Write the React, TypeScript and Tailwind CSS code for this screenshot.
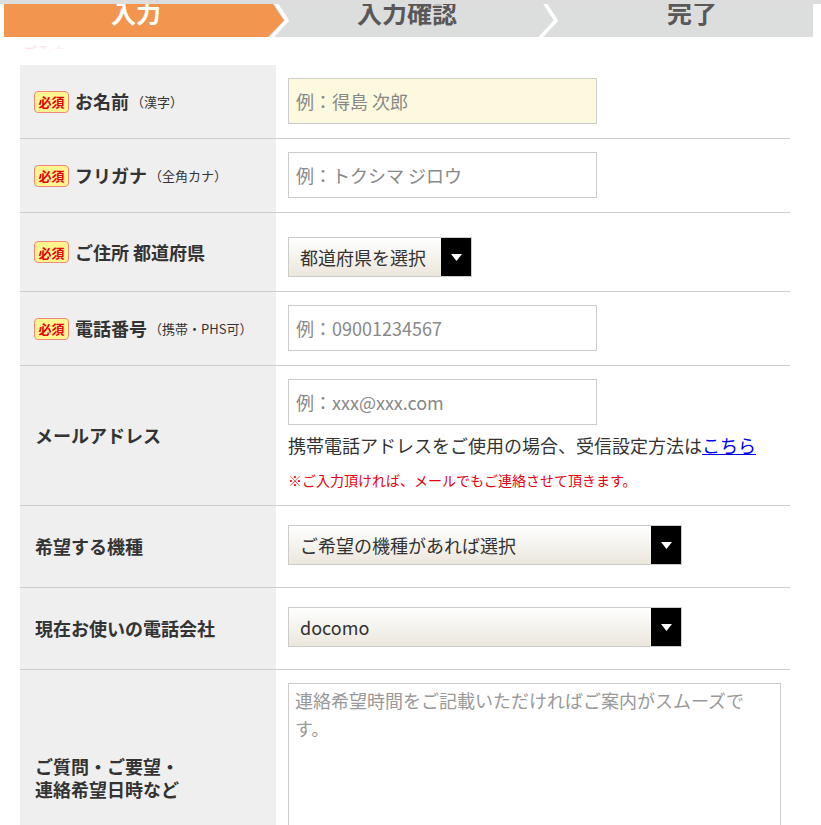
import type { ReactNode } from 'react';

function Required() {
  return (
    <span className="inline-flex h-[22px] w-[35px] shrink-0 items-center justify-center rounded-[4px] border border-[#f3877a] bg-[#fff68f] text-[13px] font-bold leading-none text-[#e60012]">
      必須
    </span>
  );
}

function Label({ text, note, required }: { text: string; note?: string; required?: boolean }) {
  return (
    <div className="flex items-center">
      {required && <Required />}
      <span className={`text-[18px] font-bold text-[#333] ${required ? 'ml-[6px]' : 'ml-[1px]'}`}>{text}</span>
      {note && <span className="ml-[2px] text-[13px] text-[#333]">{note}</span>}
    </div>
  );
}

function Row({ label, children, pad }: { label: ReactNode; children: ReactNode; pad: string }) {
  return (
    <div className="flex border-b border-[#ccc]">
      <div className="flex w-[256px] shrink-0 items-center bg-[#efefef] pl-[14px]">{label}</div>
      <div className={`flex-1 pl-[12px] ${pad}`}>{children}</div>
    </div>
  );
}

function TextInput({ placeholder, filled }: { placeholder: string; filled?: boolean }) {
  return (
    <input
      type="text"
      placeholder={placeholder}
      className={`block h-[46px] w-[309px] border border-[#ccc] px-[7px] text-[18px] text-[#333] outline-none placeholder:text-[#888] ${
        filled ? 'bg-[#fcf9df]' : 'bg-white'
      }`}
    />
  );
}

function SelectBox({ value, width }: { value: string; width: string }) {
  return (
    <div className={`flex h-[40px] ${width} items-stretch border border-[#ccc] bg-gradient-to-b from-white to-[#ece7dd]`}>
      <span className="flex flex-1 items-center pl-[11px] text-[18px] text-[#333]">{value}</span>
      <span className="flex w-[30px] items-center justify-center bg-black">
        <svg width="11" height="7" viewBox="0 0 11 7">
          <polygon points="0,0 11,0 5.5,7" fill="#fff" />
        </svg>
      </span>
    </div>
  );
}

function StepBar() {
  return (
    <div className="relative ml-[4px] h-[33px] w-[809px] overflow-hidden bg-[#dcdddd]">
      <svg className="absolute inset-0" width="809" height="33" viewBox="0 0 809 33">
        <polygon points="0,0 269,0 280,16.5 264,33 0,33" fill="#f2964f" />
        <polyline points="271,-2 283,16.5 266,35" fill="none" stroke="#fff" strokeWidth="3.5" />
        <polyline points="540,-2 552,16.5 535,35" fill="none" stroke="#fff" strokeWidth="3.5" />
      </svg>
      <div className="relative flex -mt-[4px] text-[25px] font-bold leading-none">
        <div className="w-[264px] text-center text-white">入力</div>
        <div className="w-[278px] text-center text-[#595757]">入力確認</div>
        <div className="flex-1 pl-[25px] text-center text-[#595757]">完了</div>
      </div>
    </div>
  );
}

export default function App() {
  return (
    <div className="min-h-screen bg-white font-['Noto_Sans_CJK_JP','Noto_Sans',sans-serif] text-[#333]">
      <div className="h-[4px] bg-[#dddddd]" />
      <StepBar />
      <div className="mt-[5px] h-[7px] overflow-hidden pl-[22px]">
        <div className="text-[15px] leading-[20px] text-[#fde3e3]">ご入力</div>
      </div>
      <div className="h-[16px]" />

      <div className="ml-[20px] w-[770px]">
        <Row label={<Label text="お名前" note="（漢字）" required />} pad="pt-[13px] pb-[14px]">
          <TextInput placeholder="例：得島 次郎" filled />
        </Row>
        <Row label={<Label text="フリガナ" note="（全角カナ）" required />} pad="pt-[13px] pb-[14px]">
          <TextInput placeholder="例：トクシマ ジロウ" />
        </Row>
        <Row label={<Label text="ご住所 都道府県" required />} pad="pt-[24px] pb-[14px]">
          <SelectBox value="都道府県を選択" width="w-[184px]" />
        </Row>
        <Row label={<Label text="電話番号" note="（携帯・PHS可）" required />} pad="pt-[13px] pb-[14px]">
          <TextInput placeholder="例：09001234567" />
        </Row>
        <Row label={<Label text="メールアドレス" />} pad="pt-[13px] pb-[15px]">
          <TextInput placeholder="例：xxx@xxx.com" />
          <p className="mt-[5px] text-[18px] leading-[30px] text-[#333]">
            携帯電話アドレスをご使用の場合、受信設定方法は
            <a href="#" className="text-[#0000ee] underline">
              こちら
            </a>
          </p>
          <p className="mt-[10px] text-[14px] leading-[20px] text-[#e50012]">
            ※ご入力頂ければ、メールでもご連絡させて頂きます。
          </p>
        </Row>
        <Row label={<Label text="希望する機種" />} pad="pt-[19px] pb-[22px]">
          <SelectBox value="ご希望の機種があれば選択" width="w-[394px]" />
        </Row>
        <Row label={<Label text="現在お使いの電話会社" />} pad="pt-[19px] pb-[22px]">
          <SelectBox value="docomo" width="w-[394px]" />
        </Row>
        <Row
          label={
            <div className="ml-[1px] flex flex-col text-[18px] font-bold leading-[23px] text-[#333]">
              <span>ご質問・ご要望・</span>
              <span>連絡希望日時など</span>
            </div>
          }
          pad="pt-[13px] pb-[13px]"
        >
          <textarea
            placeholder="連絡希望時間をご記載いただければご案内がスムーズです。"
            className="block h-[190px] w-[493px] border border-[#ccc] px-[6px] py-[2px] text-[18px] leading-[28px] outline-none placeholder:text-[#999]"
          />
        </Row>
      </div>
    </div>
  );
}
